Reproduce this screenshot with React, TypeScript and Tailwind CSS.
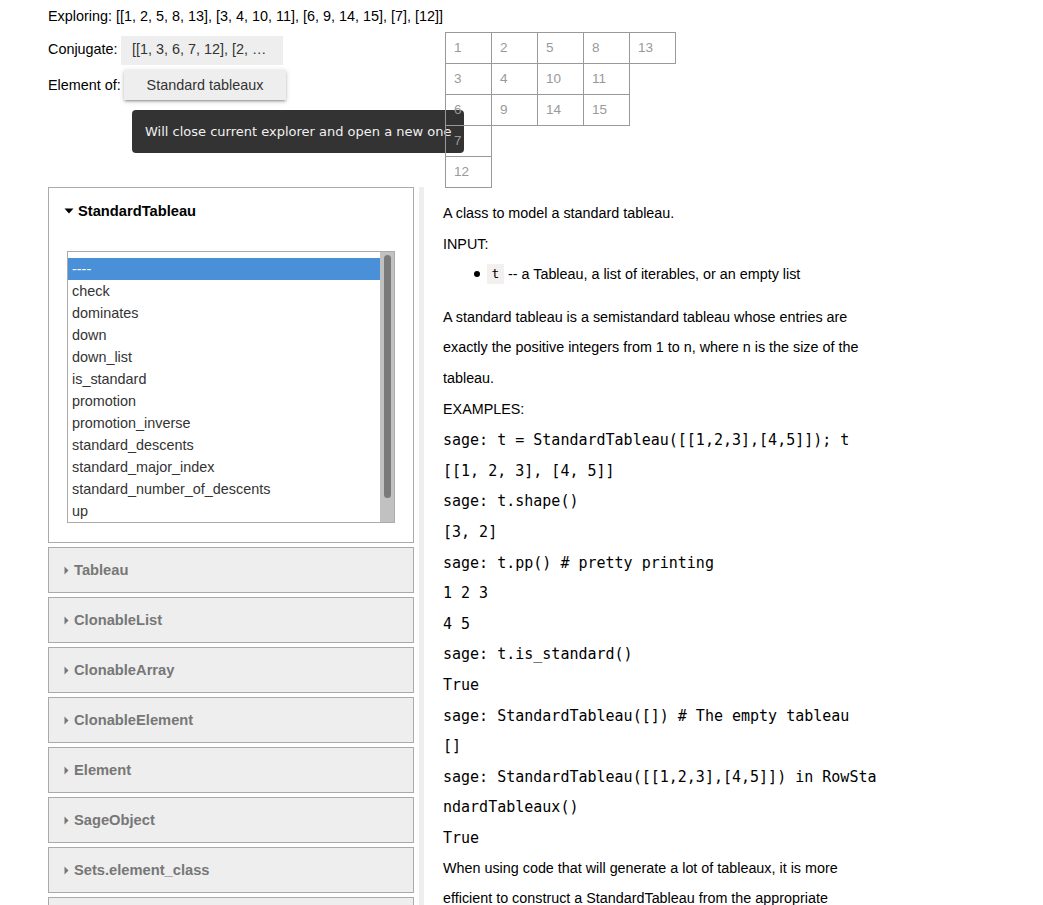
import React from "react";

const tableau = [
  [1, 2, 5, 8, 13],
  [3, 4, 10, 11],
  [6, 9, 14, 15],
  [7],
  [12],
];

const methods = [
  "----",
  "check",
  "dominates",
  "down",
  "down_list",
  "is_standard",
  "promotion",
  "promotion_inverse",
  "standard_descents",
  "standard_major_index",
  "standard_number_of_descents",
  "up",
];

const collapsed = [
  "Tableau",
  "ClonableList",
  "ClonableArray",
  "ClonableElement",
  "Element",
  "SageObject",
  "Sets.element_class",
  "",
];

const code1 = [
  "sage: t = StandardTableau([[1,2,3],[4,5]]); t",
  "[[1, 2, 3], [4, 5]]",
  "sage: t.shape()",
  "[3, 2]",
  "sage: t.pp() # pretty printing",
  "1 2 3",
  "4 5",
  "sage: t.is_standard()",
  "True",
  "sage: StandardTableau([]) # The empty tableau",
  "[]",
  "sage: StandardTableau([[1,2,3],[4,5]]) in RowSta",
  "ndardTableaux()",
  "True",
];

function Down() {
  return (
    <svg width="10" height="6" viewBox="0 0 10 6" className="mr-[4px]">
      <path d="M0.5 0.5 L9.5 0.5 L5 5.5 Z" fill="#000" />
    </svg>
  );
}

function Right() {
  return (
    <svg width="5" height="9" viewBox="0 0 5 9" className="mr-[5px]">
      <path d="M0.5 0.5 L4.5 4.5 L0.5 8.5 Z" fill="#777" />
    </svg>
  );
}

export default function App() {
  return (
    <div className="relative w-[1043px] h-[905px] overflow-hidden bg-white text-black font-['Liberation_Sans',sans-serif] text-[14px]">
      {/* Top */}
      <div className="pl-[48px] h-[32px] flex items-center pt-[1px] text-[14.4px]">
        <span>Exploring: [[1, 2, 5, 8, 13], [3, 4, 10, 11], [6, 9, 14, 15], [7], [12]]</span>
      </div>
      <div className="flex pl-[48px] h-[155px] text-[14.4px]">
        <div className="w-[397px] flex flex-col">
          <div className="flex items-center mt-[3px] h-[29px] pt-[1px]">
            <span className="w-[73px]">Conjugate:</span>
            <div className="w-[162px] h-[29px] bg-[#eeeeee] flex items-center pl-[11px] text-[#333]">
              [[1, 3, 6, 7, 12], [2, …
            </div>
          </div>
          <div className="flex items-center mt-[6px] h-[30px]">
            <span className="w-[76px] pt-[1px]">Element of:</span>
            <div className="w-[162px] h-[30px] bg-[#eeeeee] flex items-center justify-center text-[#333] pt-[1px] shadow-[0_2px_2px_0_rgba(0,0,0,0.14),0_3px_1px_-2px_rgba(0,0,0,0.12),0_1px_5px_0_rgba(0,0,0,0.2)]">
              Standard tableaux
            </div>
          </div>
        </div>
        <div className="relative z-10 flex flex-col">
          {tableau.map((row, i) => (
            <div key={i} className="flex">
              {row.map((v, j) => (
                <div
                  key={j}
                  className="w-[47px] h-[32px] border border-[#999] -mr-px -mb-px flex items-center pl-[8px] text-[13.5px] text-[#999]"
                >
                  {v}
                </div>
              ))}
            </div>
          ))}
        </div>
      </div>

      {/* Tooltip */}
      <div className="absolute left-[132px] top-[110px] w-[332px] h-[43px] rounded-[4px] bg-[#333333] text-[#f0f0f0] flex items-center pl-[13px] text-[13px] whitespace-nowrap font-['DejaVu_Sans',sans-serif]">
        Will close current explorer and open a new one
      </div>

      {/* Bottom */}
      <div className="flex">
        <div className="ml-[48px] w-[366px] flex flex-col gap-[4px]">
          <div className="h-[356px] border border-[#aaaaaa] bg-white flex flex-col">
            <div className="h-[46px] flex items-center pl-[15px] font-bold text-[14.7px]">
              <Down />
              StandardTableau
            </div>
            <div className="mx-[18px] mt-[17px] h-[272px] border border-[#aaaaaa] flex">
              <div className="flex-1 pt-[6px] text-[#333] text-[14.4px]">
                {methods.map((m, i) => (
                  <div
                    key={m}
                    className={
                      "h-[22px] pl-[4px] pt-[2px] flex items-center " +
                      (i === 0 ? "bg-[#4a90d9] text-white" : "")
                    }
                  >
                    {m}
                  </div>
                ))}
              </div>
              <div className="w-[14px] bg-[#c1c1c1] flex justify-center pt-[3px]">
                <div className="w-[7px] h-[243px] bg-[#7a7a7a] rounded-[4px]" />
              </div>
            </div>
          </div>
          {collapsed.map((c, i) => (
            <div
              key={i}
              className="h-[46px] shrink-0 border border-[#aaaaaa] bg-[#eeeeee] flex items-center pl-[15px] font-bold text-[14.7px] text-[#777]"
            >
              {c && (
                <>
                  <Right />
                  {c}
                </>
              )}
            </div>
          ))}
        </div>
        <div className="ml-[5px] w-[5px] h-[718px] bg-[#eeeeee]" />
        <div className="ml-[19px] w-[440px] text-[14.35px] leading-[30.6px] pt-[11px]">
          <div>A class to model a standard tableau.</div>
          <div>INPUT:</div>
          <ul className="pl-[44px] mb-[12px]">
            <li className="flex items-center">
              <span className="w-[6px] h-[6px] rounded-full bg-black -ml-[13px] mr-[7px]" />
              <span className="font-['DejaVu_Sans_Mono',monospace] text-[13px] bg-[#f5f0f0] w-[17px] flex justify-center leading-[20px] mr-[4px]">t</span>
              <span>-- a Tableau, a list of iterables, or an empty list</span>
            </li>
          </ul>
          <div>
            A standard tableau is a semistandard tableau whose entries are
            <br />
            exactly the positive integers from 1 to n, where n is the size of the
            <br />
            tableau.
          </div>
          <div>EXAMPLES:</div>
          <div className="font-['DejaVu_Sans_Mono',monospace] text-[15px] whitespace-pre pt-[1px] -mb-[1px]">
            {code1.map((l, i) => (
              <div key={i} className="h-[30.6px]">
                {l}
              </div>
            ))}
          </div>
          <div className="pt-[1px] -mb-[1px]">When using code that will generate a lot of tableaux, it is more</div>
          <div>efficient to construct a StandardTableau from the appropriate</div>
        </div>
      </div>
    </div>
  );
}
